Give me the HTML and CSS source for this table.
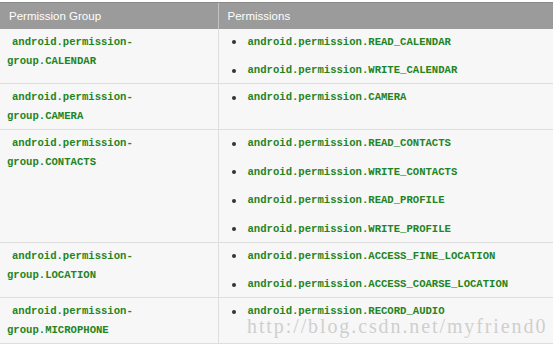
FILE: index.html
```html
<!DOCTYPE html>
<html lang="en">
<head>
  <meta charset="UTF-8">
  <meta name="viewport" content="width=device-width, initial-scale=1">
  <title>Permission Groups</title>
  <link rel="stylesheet" href="styles.css">
</head>
<body>
  <div class="page">
    <table class="perm-table">
      <thead>
        <tr>
          <th class="col-group">Permission Group</th>
          <th>Permissions</th>
        </tr>
      </thead>
      <tbody>
        <tr>
          <td class="group"><code>android.permission-group.CALENDAR</code></td>
          <td>
            <ul>
              <li><code>android.permission.READ_CALENDAR</code></li>
              <li><code>android.permission.WRITE_CALENDAR</code></li>
            </ul>
          </td>
        </tr>
        <tr>
          <td class="group"><code>android.permission-group.CAMERA</code></td>
          <td>
            <ul>
              <li><code>android.permission.CAMERA</code></li>
            </ul>
          </td>
        </tr>
        <tr>
          <td class="group"><code>android.permission-group.CONTACTS</code></td>
          <td>
            <ul>
              <li><code>android.permission.READ_CONTACTS</code></li>
              <li><code>android.permission.WRITE_CONTACTS</code></li>
              <li><code>android.permission.READ_PROFILE</code></li>
              <li><code>android.permission.WRITE_PROFILE</code></li>
            </ul>
          </td>
        </tr>
        <tr>
          <td class="group"><code>android.permission-group.LOCATION</code></td>
          <td>
            <ul>
              <li><code>android.permission.ACCESS_FINE_LOCATION</code></li>
              <li><code>android.permission.ACCESS_COARSE_LOCATION</code></li>
            </ul>
          </td>
        </tr>
        <tr>
          <td class="group"><code>android.permission-group.MICROPHONE</code></td>
          <td>
            <ul>
              <li><code>android.permission.RECORD_AUDIO</code></li>
            </ul>
          </td>
        </tr>
      </tbody>
    </table>
    <div class="watermark">http://blog.csdn.net/myfriend0</div>
  </div>
</body>
</html>
```

FILE: styles.css
```css
* {
  box-sizing: border-box;
}

body {
  margin: 0;
  background-color: #ffffff;
  font-family: "Liberation Sans", Arial, sans-serif;
}

.page {
  position: relative;
  width: 553px;
  padding-top: 2px;
}

.perm-table {
  width: 553px;
  border-collapse: collapse;
  table-layout: fixed;
}

.perm-table th {
  background-color: #9b9b9b;
  color: #ffffff;
  font-weight: normal;
  font-size: 11.5px;
  text-align: left;
  height: 26px;
  padding: 0 9px;
  border-top: 1px solid #8a8a8a;
  border-left: 1px solid #c4c4c4;
}

.perm-table th.col-group {
  width: 218px;
  border-left: none;
}

.perm-table td {
  background-color: #f7f7f7;
  vertical-align: top;
  font-family: "Liberation Mono", "DejaVu Sans Mono", monospace;
  font-size: 10.6px;
  line-height: 19px;
  padding: 4px 10px 3px 7px;
  border-bottom: 1px solid #dedede;
  border-left: 1px solid #dedede;
}

.perm-table td.group {
  border-left: none;
  text-indent: 5px;
}

code {
  font-family: inherit;
  font-size: inherit;
  font-weight: bold;
  color: #238423;
}

ul {
  margin: 0;
  padding-left: 6px;
  list-style: none;
}

li {
  display: flex;
  align-items: center;
  margin-bottom: 9.5px;
}

li::before {
  content: "";
  width: 4px;
  height: 4px;
  border-radius: 50%;
  background-color: #333333;
  margin-right: 12px;
  flex-shrink: 0;
}

li:last-child {
  margin-bottom: 0;
}

.watermark {
  position: absolute;
  left: 247px;
  top: 315px;
  font-family: "Liberation Serif", serif;
  font-size: 20px;
  letter-spacing: 1.9px;
  color: #cfcfcf;
  pointer-events: none;
}
```
